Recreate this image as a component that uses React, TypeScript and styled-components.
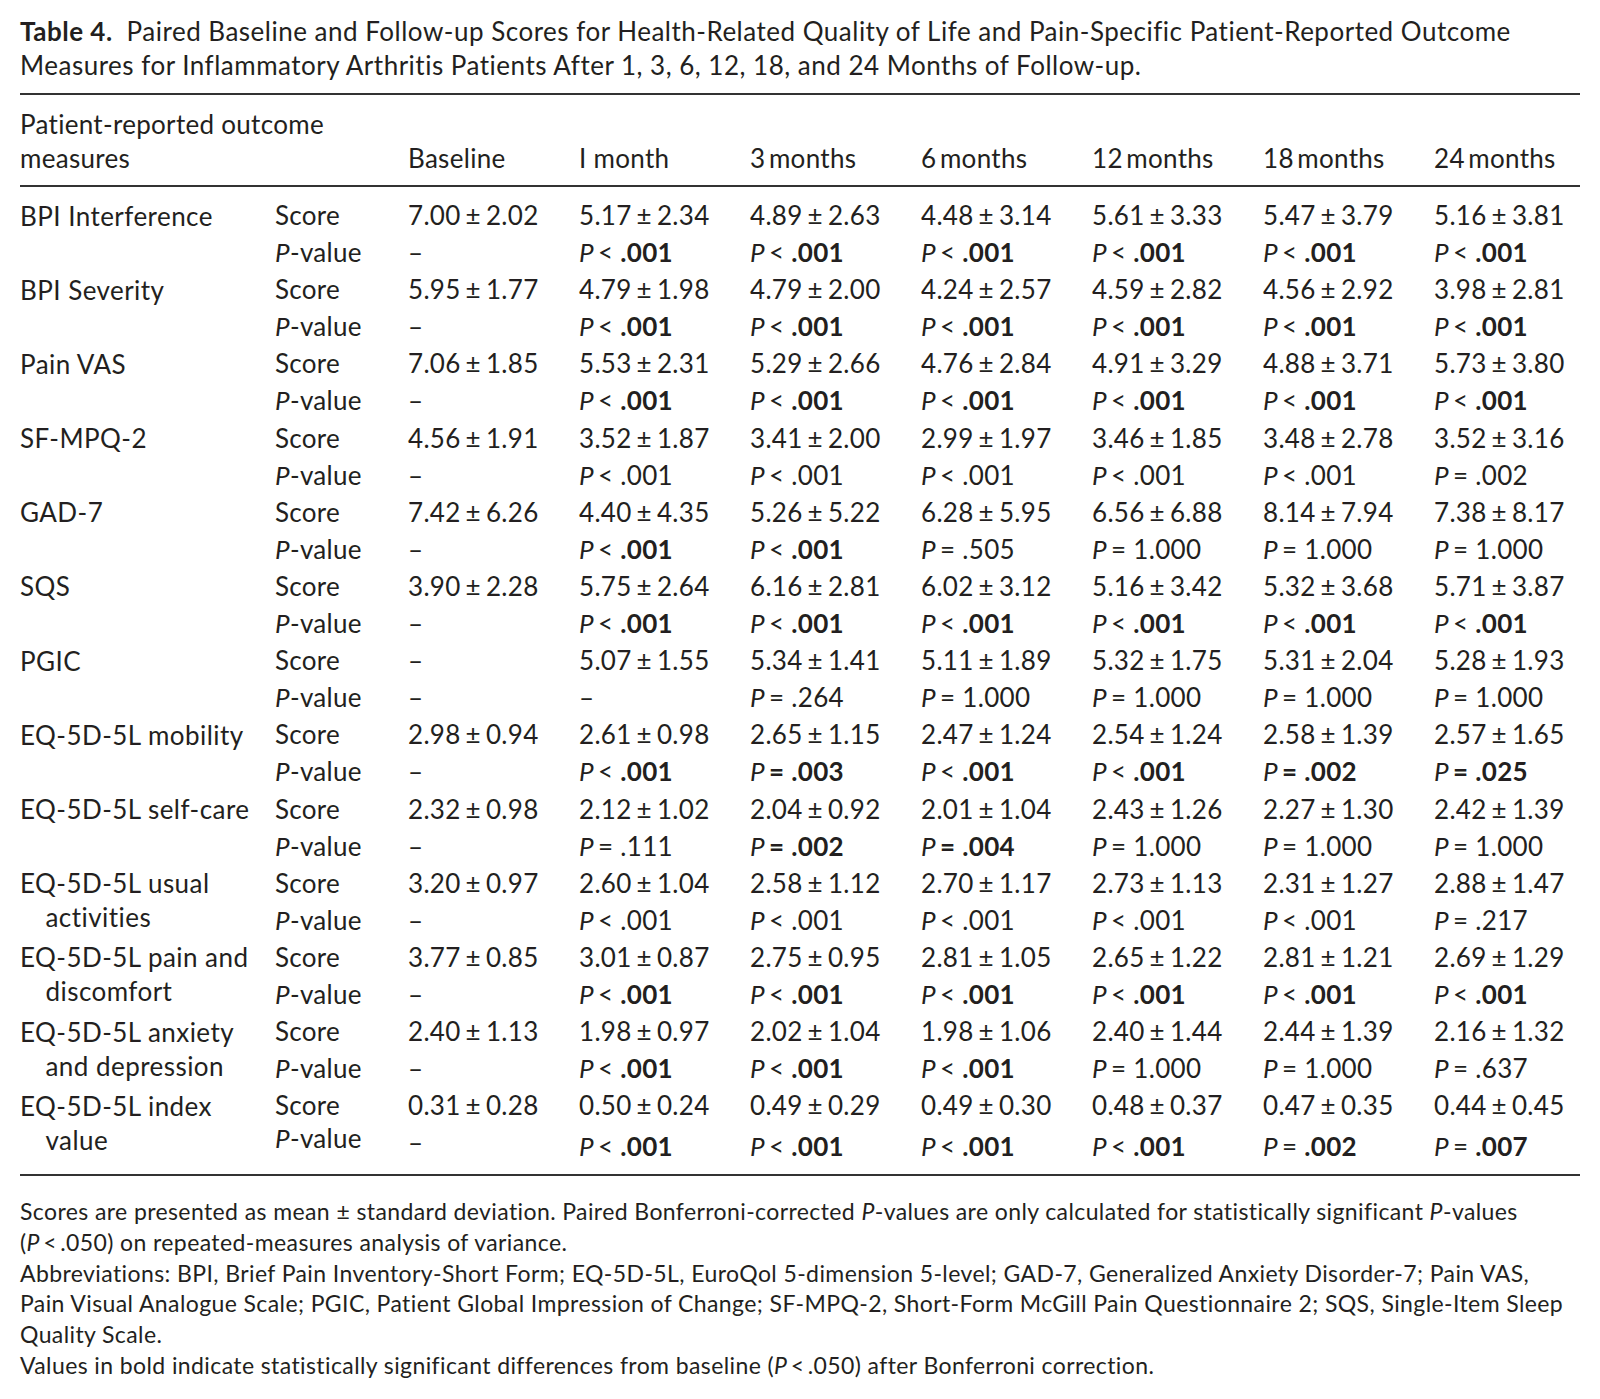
import React from 'react';
import styled, { createGlobalStyle } from 'styled-components';

const Global = createGlobalStyle`
  html, body { margin: 0; padding: 0; background: #ffffff; }
  body { font-family: Lato, "Open Sans", sans-serif; color: #231f20; }
`;

const COLS = '255px 133px 171px 171px 171px 171px 171px 171px 146px';

const Page = styled.div`
  width: 1560px;
  padding: 13.5px 20px 0 20px;
`;

const Caption = styled.div`
  font-size: 26px;
  line-height: 34px;
  letter-spacing: 0.5px;
  margin-bottom: 11.5px;
  white-space: nowrap;
`;

const CaptionLabel = styled.b`
  font-weight: 700;
  margin-right: 14px;
`;

const Table = styled.div`
  border-top: 2px solid #333;
  border-bottom: 2px solid #333;
  font-size: 26px;
  letter-spacing: 0.3px;
  white-space: nowrap;
`;

const HeadRow = styled.div`
  display: grid;
  grid-template-columns: ${COLS};
  align-items: end;
  padding: 11.5px 0 10.5px;
  border-bottom: 2px solid #333;
  line-height: 34px;
`;

const HeadLabel = styled.div`
  grid-column: span 2;
`;

const HeadCell = styled.div``;

const Body = styled.div<{ $rows: number }>`
  display: grid;
  grid-template-columns: ${COLS};
  grid-template-rows: repeat(${(p) => p.$rows - 1}, 37.1px) 41px;
  padding: 10px 0 9px;
`;

const Label = styled.div`
  grid-row: span 2;
  line-height: 34px;
  padding: 1.5px 0 0 25.5px;
  text-indent: -25.5px;
  letter-spacing: 0.45px;
`;

const TypeCell = styled.div<{ $tight?: boolean }>`
  line-height: ${(p) => (p.$tight ? '29px' : '37.1px')};
`;

const ValueCell = styled.div<{ $bottom?: boolean }>`
  line-height: 37.1px;
  align-self: ${(p) => (p.$bottom ? 'end' : 'start')};
`;

const Ital = styled.i`
  font-style: italic;
`;

const Op = styled.span<{ $bold?: boolean }>`
  font-weight: ${(p) => (p.$bold ? 700 : 400)};
  margin: 0 7px 0 4px;
`;

const Num = styled.span<{ $bold?: boolean }>`
  font-weight: ${(p) => (p.$bold ? 700 : 400)};
`;

const Pm = styled.span`
  margin: 0 5px;
`;

const Notes = styled.div`
  padding-top: 20px;
  font-size: 23px;
  letter-spacing: 0.4px;
  line-height: 30.7px;
  white-space: nowrap;
`;

const Note = styled.p`
  margin: 0;
`;

type PV = { op: '<' | '='; v: string; b: 0 | 1 | 2 } | null;

const L1: PV = { op: '<', v: '.001', b: 1 };
const L0: PV = { op: '<', v: '.001', b: 0 };
const E = (v: string, b: 0 | 1 | 2 = 0): PV => ({ op: '=', v, b });

type Row = { label: string[]; s: (string | null)[]; p: PV[] };

const ROWS: Row[] = [
  {
    label: ['BPI Interference'],
    s: ['7.00 2.02', '5.17 2.34', '4.89 2.63', '4.48 3.14', '5.61 3.33', '5.47 3.79', '5.16 3.81'],
    p: [null, L1, L1, L1, L1, L1, L1],
  },
  {
    label: ['BPI Severity'],
    s: ['5.95 1.77', '4.79 1.98', '4.79 2.00', '4.24 2.57', '4.59 2.82', '4.56 2.92', '3.98 2.81'],
    p: [null, L1, L1, L1, L1, L1, L1],
  },
  {
    label: ['Pain VAS'],
    s: ['7.06 1.85', '5.53 2.31', '5.29 2.66', '4.76 2.84', '4.91 3.29', '4.88 3.71', '5.73 3.80'],
    p: [null, L1, L1, L1, L1, L1, L1],
  },
  {
    label: ['SF-MPQ-2'],
    s: ['4.56 1.91', '3.52 1.87', '3.41 2.00', '2.99 1.97', '3.46 1.85', '3.48 2.78', '3.52 3.16'],
    p: [null, L0, L0, L0, L0, L0, E('.002')],
  },
  {
    label: ['GAD-7'],
    s: ['7.42 6.26', '4.40 4.35', '5.26 5.22', '6.28 5.95', '6.56 6.88', '8.14 7.94', '7.38 8.17'],
    p: [null, L1, L1, E('.505'), E('1.000'), E('1.000'), E('1.000')],
  },
  {
    label: ['SQS'],
    s: ['3.90 2.28', '5.75 2.64', '6.16 2.81', '6.02 3.12', '5.16 3.42', '5.32 3.68', '5.71 3.87'],
    p: [null, L1, L1, L1, L1, L1, L1],
  },
  {
    label: ['PGIC'],
    s: [null, '5.07 1.55', '5.34 1.41', '5.11 1.89', '5.32 1.75', '5.31 2.04', '5.28 1.93'],
    p: [null, null, E('.264'), E('1.000'), E('1.000'), E('1.000'), E('1.000')],
  },
  {
    label: ['EQ-5D-5L mobility'],
    s: ['2.98 0.94', '2.61 0.98', '2.65 1.15', '2.47 1.24', '2.54 1.24', '2.58 1.39', '2.57 1.65'],
    p: [null, L1, E('.003', 2), L1, L1, E('.002', 2), E('.025', 2)],
  },
  {
    label: ['EQ-5D-5L self-care'],
    s: ['2.32 0.98', '2.12 1.02', '2.04 0.92', '2.01 1.04', '2.43 1.26', '2.27 1.30', '2.42 1.39'],
    p: [null, E('.111'), E('.002', 2), E('.004', 2), E('1.000'), E('1.000'), E('1.000')],
  },
  {
    label: ['EQ-5D-5L usual', 'activities'],
    s: ['3.20 0.97', '2.60 1.04', '2.58 1.12', '2.70 1.17', '2.73 1.13', '2.31 1.27', '2.88 1.47'],
    p: [null, L0, L0, L0, L0, L0, E('.217')],
  },
  {
    label: ['EQ-5D-5L pain and', 'discomfort'],
    s: ['3.77 0.85', '3.01 0.87', '2.75 0.95', '2.81 1.05', '2.65 1.22', '2.81 1.21', '2.69 1.29'],
    p: [null, L1, L1, L1, L1, L1, L1],
  },
  {
    label: ['EQ-5D-5L anxiety', 'and depression'],
    s: ['2.40 1.13', '1.98 0.97', '2.02 1.04', '1.98 1.06', '2.40 1.44', '2.44 1.39', '2.16 1.32'],
    p: [null, L1, L1, L1, E('1.000'), E('1.000'), E('.637')],
  },
  {
    label: ['EQ-5D-5L index', 'value'],
    s: ['0.31 0.28', '0.50 0.24', '0.49 0.29', '0.49 0.30', '0.48 0.37', '0.47 0.35', '0.44 0.45'],
    p: [null, L1, L1, L1, L1, E('.002', 1), E('.007', 1)],
  },
];

const HEADERS = ['Baseline', 'I month', '3\u2009months', '6\u2009months', '12\u2009months', '18\u2009months', '24\u2009months'];

function Score({ s }: { s: string | null }) {
  if (!s) return <>–</>;
  const [m, d] = s.split(' ');
  return (
    <>
      {m}
      <Pm>±</Pm>
      {d}
    </>
  );
}

function PValue({ p }: { p: PV }) {
  if (!p) return <>–</>;
  return (
    <>
      <Ital>P</Ital>
      <Op $bold={p.b === 2}>{p.op}</Op>
      <Num $bold={p.b >= 1}>{p.v}</Num>
    </>
  );
}

function Labels({ lines }: { lines: string[] }) {
  return (
    <Label>
      {lines.map((l, i) => (
        <React.Fragment key={i}>
          {i > 0 && <br />}
          {l}
        </React.Fragment>
      ))}
    </Label>
  );
}

export default function App() {
  const totalRows = ROWS.length * 2;
  return (
    <Page>
      <Global />
      <Caption>
        <CaptionLabel>Table 4.</CaptionLabel>
        Paired Baseline and Follow-up Scores for Health-Related Quality of Life and Pain-Specific Patient-Reported Outcome
        <br />
        Measures for Inflammatory Arthritis Patients After 1, 3, 6, 12, 18, and 24 Months of Follow-up.
      </Caption>
      <Table>
        <HeadRow>
          <HeadLabel>
            Patient-reported outcome
            <br />
            measures
          </HeadLabel>
          {HEADERS.map((h) => (
            <HeadCell key={h}>{h}</HeadCell>
          ))}
        </HeadRow>
        <Body $rows={totalRows}>
          {ROWS.map((r, ri) => {
            const last = ri === ROWS.length - 1;
            return (
              <React.Fragment key={ri}>
                <Labels lines={r.label} />
                <TypeCell>Score</TypeCell>
                {r.s.map((s, i) => (
                  <ValueCell key={'s' + i}>
                    <Score s={s} />
                  </ValueCell>
                ))}
                <TypeCell $tight={last}>
                  <Ital>P</Ital>-value
                </TypeCell>
                {r.p.map((p, i) => (
                  <ValueCell key={'p' + i} $bottom={last && i > 0}>
                    <PValue p={p} />
                  </ValueCell>
                ))}
              </React.Fragment>
            );
          })}
        </Body>
      </Table>
      <Notes>
        <Note>
          Scores are presented as mean ± standard deviation. Paired Bonferroni-corrected <Ital>P</Ital>-values are only
          calculated for statistically significant <Ital>P</Ital>-values
          <br />(<Ital>P</Ital>&thinsp;&lt;&thinsp;.050) on repeated-measures analysis of variance.
        </Note>
        <Note>
          Abbreviations: BPI, Brief Pain Inventory-Short Form; EQ-5D-5L, EuroQol 5-dimension 5-level; GAD-7, Generalized
          Anxiety Disorder-7; Pain VAS,
          <br />
          Pain Visual Analogue Scale; PGIC, Patient Global Impression of Change; SF-MPQ-2, Short-Form McGill Pain
          Questionnaire 2; SQS, Single-Item Sleep
          <br />
          Quality Scale.
        </Note>
        <Note>
          Values in bold indicate statistically significant differences from baseline (<Ital>P</Ital>&thinsp;&lt;&thinsp;.050)
          after Bonferroni correction.
        </Note>
      </Notes>
    </Page>
  );
}
